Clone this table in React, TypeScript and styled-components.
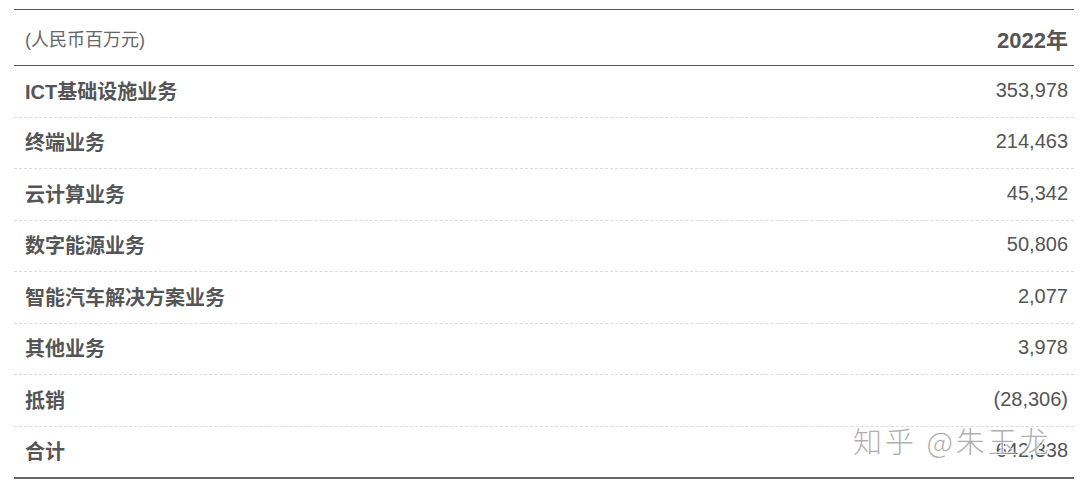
import React from "react";
import styled, { createGlobalStyle } from "styled-components";

const Global = createGlobalStyle`
  html, body { margin: 0; padding: 0; background: #fff; }
  body { font-family: "Liberation Sans", "Noto Sans CJK SC", sans-serif; }
`;

const Page = styled.div`
  position: relative;
  width: 1080px;
  height: 483px;
  padding: 9px 6px 0 14px;
  box-sizing: border-box;
`;

const Table = styled.div`
  display: flex;
  flex-direction: column;
  border-top: 1px solid #555;
  border-bottom: 2px solid #666;
`;

const HeaderRow = styled.div`
  display: flex;
  align-items: center;
  justify-content: space-between;
  height: 56px;
  box-sizing: border-box;
  padding: 0 6px 0 11px;
  border-bottom: 1px solid #555;
`;

const Row = styled.div<{ $last?: boolean }>`
  display: flex;
  align-items: center;
  justify-content: space-between;
  height: ${(p) => (p.$last ? "50.5px" : "51.5px")};
  box-sizing: border-box;
  padding: 0 6px 2px 11px;
  border-bottom: ${(p) => (p.$last ? "none" : "1px dashed #dcdcdc")};
`;

const Unit = styled.span`
  font-size: 18px;
  color: #666;
  font-family: "Liberation Sans", "Noto Sans CJK SC", sans-serif;
`;

const Year = styled.span`
  font-size: 22px;
  font-weight: 700;
  color: #555;
  font-family: "Liberation Sans", "Noto Sans CJK SC", sans-serif;
`;

const Label = styled.span`
  font-size: 20px;
  font-weight: 700;
  color: #555;
  font-family: "Liberation Sans", "Noto Sans CJK SC", sans-serif;
`;

const Value = styled.span`
  font-size: 20px;
  color: #555;
  font-family: "Liberation Sans", sans-serif;
`;

const Watermark = styled.div`
  position: absolute;
  left: 853px;
  top: 419px;
  font-size: 29px;
  letter-spacing: 3px;
  color: rgba(140, 140, 140, 0.7);
  font-family: "Noto Sans CJK SC", sans-serif;
  font-weight: 300;
  text-shadow: 1px 1px 0 #fff, -1px -1px 0 rgba(255,255,255,0.9);
  pointer-events: none;
  white-space: nowrap;
`;

const rows: [string, string][] = [
  ["ICT基础设施业务", "353,978"],
  ["终端业务", "214,463"],
  ["云计算业务", "45,342"],
  ["数字能源业务", "50,806"],
  ["智能汽车解决方案业务", "2,077"],
  ["其他业务", "3,978"],
  ["抵销", "(28,306)"],
  ["合计", "642,338"],
];

export default function App() {
  return (
    <>
      <Global />
      <Page>
        <Table>
          <HeaderRow>
            <Unit>(人民币百万元)</Unit>
            <Year>2022年</Year>
          </HeaderRow>
          {rows.map(([l, v], i) => (
            <Row key={l} $last={i === rows.length - 1}>
              <Label>{l}</Label>
              <Value>{v}</Value>
            </Row>
          ))}
        </Table>
        <Watermark>知乎 @朱玉龙</Watermark>
      </Page>
    </>
  );
}
